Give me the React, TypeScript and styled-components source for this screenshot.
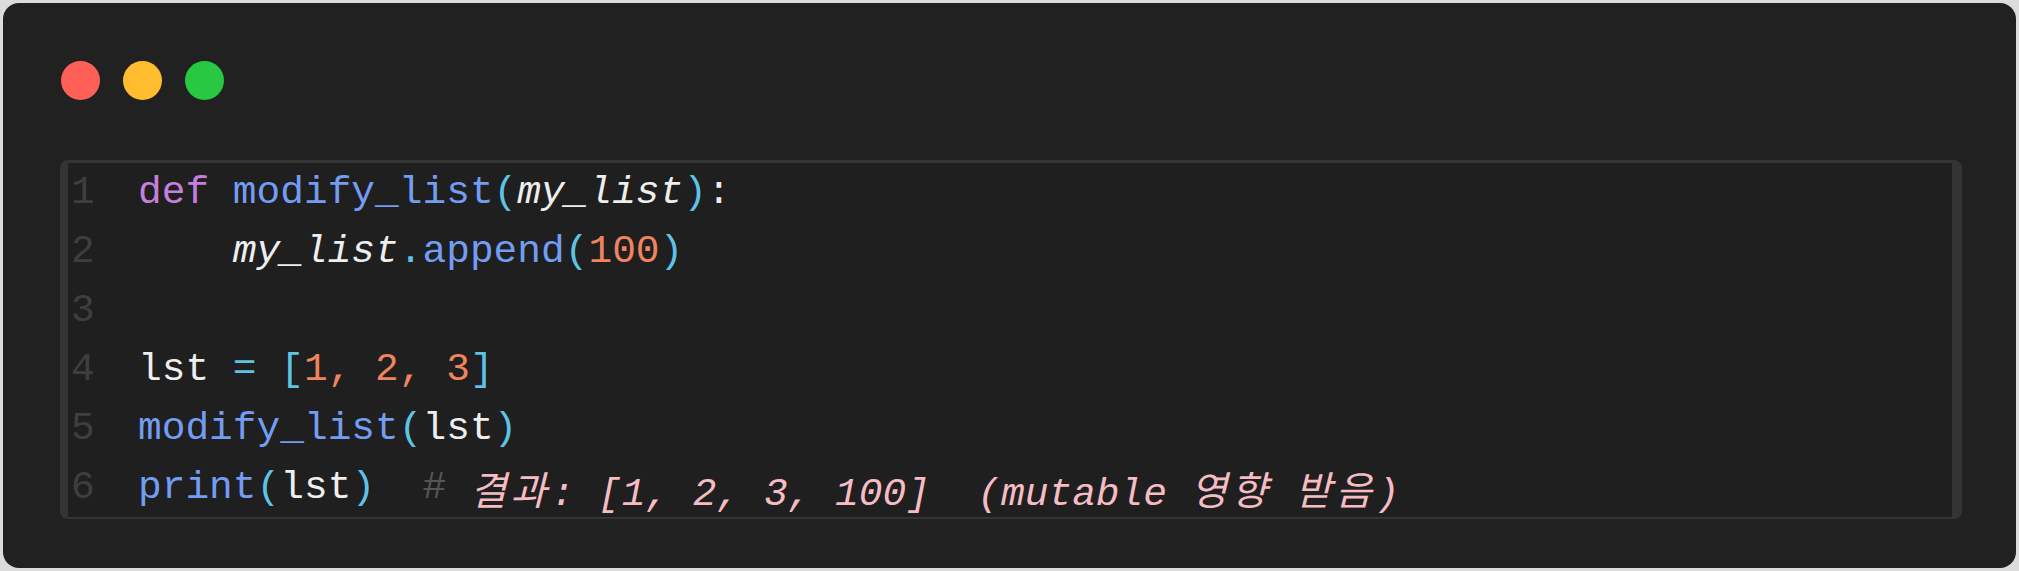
import React from "react";
import styled, { createGlobalStyle } from "styled-components";

const GlobalStyle = createGlobalStyle`
  html, body {
    margin: 0;
    padding: 0;
    background: #dcdcdc;
  }
  * { box-sizing: border-box; }
`;

const Page = styled.div`
  padding: 3px;
  width: 2019px;
  height: 571px;
`;

const Card = styled.div`
  background: #212121;
  border-radius: 16px;
  height: 565px;
  padding: 58px 54px 52px 57px;
  display: flex;
  flex-direction: column;
  gap: 60px;
`;

const TitleBar = styled.div`
  display: flex;
  gap: 23px;
  padding-left: 1px;
`;

const Dot = styled.span<{ $color: string }>`
  width: 39px;
  height: 39px;
  border-radius: 50%;
  background: ${(p) => p.$color};
`;

const CodeBox = styled.div`
  background: #1f1f1f;
  border: 3px solid #343434;
  border-bottom-width: 2px;
  border-left-width: 8px;
  border-right-width: 10px;
  border-radius: 8px;
  font-family: "Liberation Mono", "Noto Sans CJK KR", monospace;
  font-size: 39.5px;
`;

const Line = styled.div`
  display: flex;
  align-items: center;
  height: 59px;
  white-space: pre;
`;

const LineNo = styled.span`
  width: 70px;
  padding-left: 3px;
  color: #3e3e3e;
`;

const Tok = styled.span<{ $c: string; $i?: boolean }>`
  color: ${(p) => p.$c};
  font-style: ${(p) => (p.$i ? "italic" : "normal")};
`;

const Hangul = styled.span`
  letter-spacing: 4px;
`;

const C = {
  kw: "#c67fdc",
  fn: "#739df2",
  punc: "#5ec4e6",
  id: "#eeeeee",
  num: "#f0845f",
  hash: "#555555",
  cm: "#f5bcc3",
};

type T = [string, string, boolean?];

const lines: T[][] = [
  [
    ["def", C.kw],
    [" ", C.id],
    ["modify_list", C.fn],
    ["(", C.punc],
    ["my_list", C.id, true],
    [")", C.punc],
    [":", C.id],
  ],
  [
    ["    ", C.id],
    ["my_list", C.id, true],
    [".", C.punc],
    ["append", C.fn],
    ["(", C.punc],
    ["100", C.num],
    [")", C.punc],
  ],
  [],
  [
    ["lst", C.id],
    [" ", C.id],
    ["=", C.punc],
    [" ", C.id],
    ["[", C.punc],
    ["1, 2, 3", C.num],
    ["]", C.punc],
  ],
  [
    ["modify_list", C.fn],
    ["(", C.punc],
    ["lst", C.id],
    [")", C.punc],
  ],
  [
    ["print", C.fn],
    ["(", C.punc],
    ["lst", C.id],
    [")", C.punc],
    ["  ", C.id],
    ["#", C.hash],
    [" ", C.id],
    ["결과: [1, 2, 3, 100]  (mutable 영향 받음)", C.cm, true],
  ],
];

const renderText = (t: string) =>
  t.split(/([\uac00-\ud7a3]+)/).map((part, k) =>
    /[\uac00-\ud7a3]/.test(part) ? <Hangul key={k}>{part}</Hangul> : part
  );

export default function App() {
  return (
    <Page>
      <GlobalStyle />
      <Card>
        <TitleBar>
          <Dot $color="#fe5f57" />
          <Dot $color="#febc2e" />
          <Dot $color="#28c840" />
        </TitleBar>
        <CodeBox>
          {lines.map((toks, i) => (
            <Line key={i}>
              <LineNo>{i + 1}</LineNo>
              {toks.map(([t, c, it], j) => (
                <Tok key={j} $c={c} $i={it}>
                  {renderText(t)}
                </Tok>
              ))}
            </Line>
          ))}
        </CodeBox>
      </Card>
    </Page>
  );
}
